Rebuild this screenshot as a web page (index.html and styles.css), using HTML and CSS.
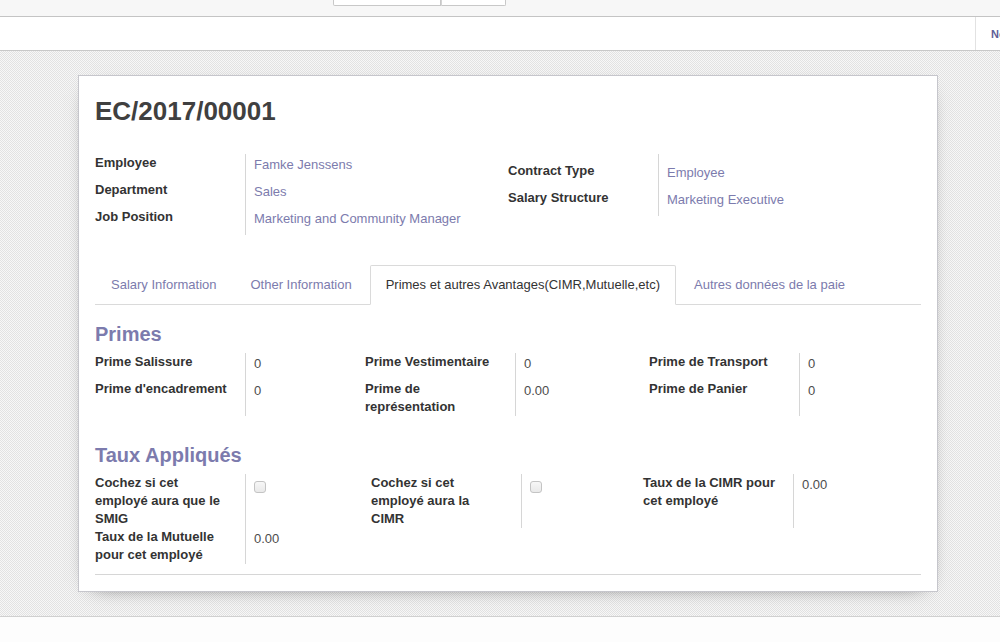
FILE: index.html
```html
<!DOCTYPE html>
<html lang="fr">
<head>
<meta charset="utf-8">
<title>EC/2017/00001</title>
<link rel="stylesheet" href="styles.css">
</head>
<body>
<div class="topbar">
  <div class="btn-group"><span class="btn b1"></span><span class="btn b2"></span></div>
</div>
<div class="cpanel">
  <div class="cp-right"><span class="new">Nouveau</span></div>
</div>
<div class="content">
  <div class="sheet">
    <h1 class="title">EC/2017/00001</h1>
    <div class="groups">
      <div class="fgrid">
        <div class="lbl">Employee</div><div class="val link">Famke Jenssens</div>
        <div class="lbl">Department</div><div class="val link">Sales</div>
        <div class="lbl">Job Position</div><div class="val link">Marketing and Community Manager</div>
      </div>
      <div class="fgrid g2">
        <div class="lbl first">Contract Type</div><div class="val link first">Employee</div>
        <div class="lbl">Salary Structure</div><div class="val link">Marketing Executive</div>
      </div>
    </div>
    <div class="tabs">
      <div class="tab">Salary Information</div>
      <div class="tab">Other Information</div>
      <div class="tab active">Primes et autres Avantages(CIMR,Mutuelle,etc)</div>
      <div class="tab">Autres données de la paie</div>
    </div>
    <h2 class="sec">Primes</h2>
    <div class="grid primes">
      <div class="lbl">Prime Salissure</div><div class="val">0</div>
      <div class="lbl">Prime Vestimentaire</div><div class="val">0</div>
      <div class="lbl">Prime de Transport</div><div class="val">0</div>
      <div class="lbl">Prime d'encadrement</div><div class="val">0</div>
      <div class="lbl">Prime de représentation</div><div class="val">0.00</div>
      <div class="lbl">Prime de Panier</div><div class="val">0</div>
    </div>
    <h2 class="sec">Taux Appliqués</h2>
    <div class="grid taux">
      <div class="lbl">Cochez si cet employé aura que le SMIG</div><div class="val"><span class="cb"></span></div>
      <div class="lbl">Cochez si cet employé aura la CIMR</div><div class="val"><span class="cb"></span></div>
      <div class="lbl">Taux de la CIMR pour cet employé</div><div class="val">0.00</div>
      <div class="lbl">Taux de la Mutuelle pour cet employé</div><div class="val">0.00</div>
    </div>
    <div class="rule"></div>
  </div>
</div>
<div class="footer"></div>
</body>
</html>
```

FILE: styles.css
```css
html, body {
  margin: 0;
  padding: 0;
  overflow: hidden;
  background: #fdfdfd;
}
body {
  font-family: "Liberation Sans", Arial, sans-serif;
  font-size: 13px;
  line-height: 18px;
  color: #4c4c4c;
}

/* top strip */
.topbar {
  height: 16px;
  background: #f7f7f7;
  border-bottom: 1px solid #c4c4c4;
  display: flex;
  padding-left: 333px;
}
.btn-group {
  display: flex;
  height: 6px;
}
.btn {
  display: block;
  height: 5px;
  background: #fff;
  border: 1px solid #c8c8c8;
  border-top: none;
}
.b1 {
  width: 106px;
  border-radius: 0 0 0 2px;
}
.b2 {
  width: 63px;
  border-left: 1px solid #d4d4d4;
  border-radius: 0 0 2px 0;
}

/* control panel */
.cpanel {
  height: 33px;
  background: #fff;
  border-bottom: 1px solid #c8c8c8;
  display: flex;
  justify-content: flex-end;
}
.cp-right {
  width: 9px;
  border-left: 1px solid #e2e2e2;
  padding-left: 15px;
  display: flex;
  align-items: center;
  overflow: hidden;
  white-space: nowrap;
}
.new {
  font-size: 11px;
  font-weight: bold;
  color: #5f5e97;
}

/* sheet background */
.content {
  padding: 24px 0;
  background: repeating-conic-gradient(#e2e2e2 0 25%, #f7f7f7 0 50%) 0 0 / 2px 2px;
  border-bottom: 1px solid #d0d0d0;
}
.sheet {
  box-sizing: border-box;
  width: 860px;
  margin-left: 78px;
  background: #fff;
  border: 1px solid #c6c6cc;
  box-shadow: 0 5px 20px -15px #000;
  padding: 0 16px 16px;
}
.title {
  margin: 20px 0 0;
  font-size: 26px;
  line-height: 30px;
  font-weight: bold;
  color: #404040;
}

/* field groups */
.groups {
  display: flex;
  align-items: flex-start;
  margin-top: 28px;
}
.fgrid {
  flex: 0 0 413px;
  display: grid;
  grid-template-columns: 150px 1fr;
}
.lbl {
  box-sizing: border-box;
  padding-right: 15px;
  font-weight: bold;
  color: #333;
}
.val {
  border-left: 1px solid #d6d6d6;
  padding: 2px 0 7px 8px;
  color: #4c4c4c;
}
.link {
  color: #7c7bad;
}
.g2 .lbl.first {
  padding-top: 8px;
}
.g2 .val.first {
  padding-top: 10px;
}

/* tabs */
.tabs {
  display: flex;
  margin-top: 30px;
  border-bottom: 1px solid #dadada;
}
.tab {
  padding: 10px 15px;
  margin: 0 2px -1px 0;
  border: 1px solid transparent;
  border-radius: 2px 2px 0 0;
  color: #7c7bad;
  white-space: nowrap;
}
.tab.active {
  border-color: #dadada #dadada transparent;
  background: #fff;
  color: #333;
}

/* sections */
.sec {
  margin: 18px 0 8px;
  font-size: 20px;
  line-height: 22px;
  font-weight: bold;
  color: #7c7bad;
}
.grid {
  display: grid;
  padding-bottom: 10px;
}
.primes {
  grid-template-columns: 150px 120px 150px 134px 150px 1fr;
}
.taux {
  grid-template-columns: 150px 126px 150px 122px 150px 1fr;
}
.cb {
  display: block;
  box-sizing: border-box;
  width: 12px;
  height: 12px;
  margin-top: 5px;
  border: 1px solid #c4c4c4;
  border-radius: 3px;
  background: linear-gradient(#f7f7f7, #e9e9e9);
}
.rule {
  height: 1px;
  background: #d6d6d6;
}

.footer {
  height: 40px;
  background: #fdfdfd;
}
```
